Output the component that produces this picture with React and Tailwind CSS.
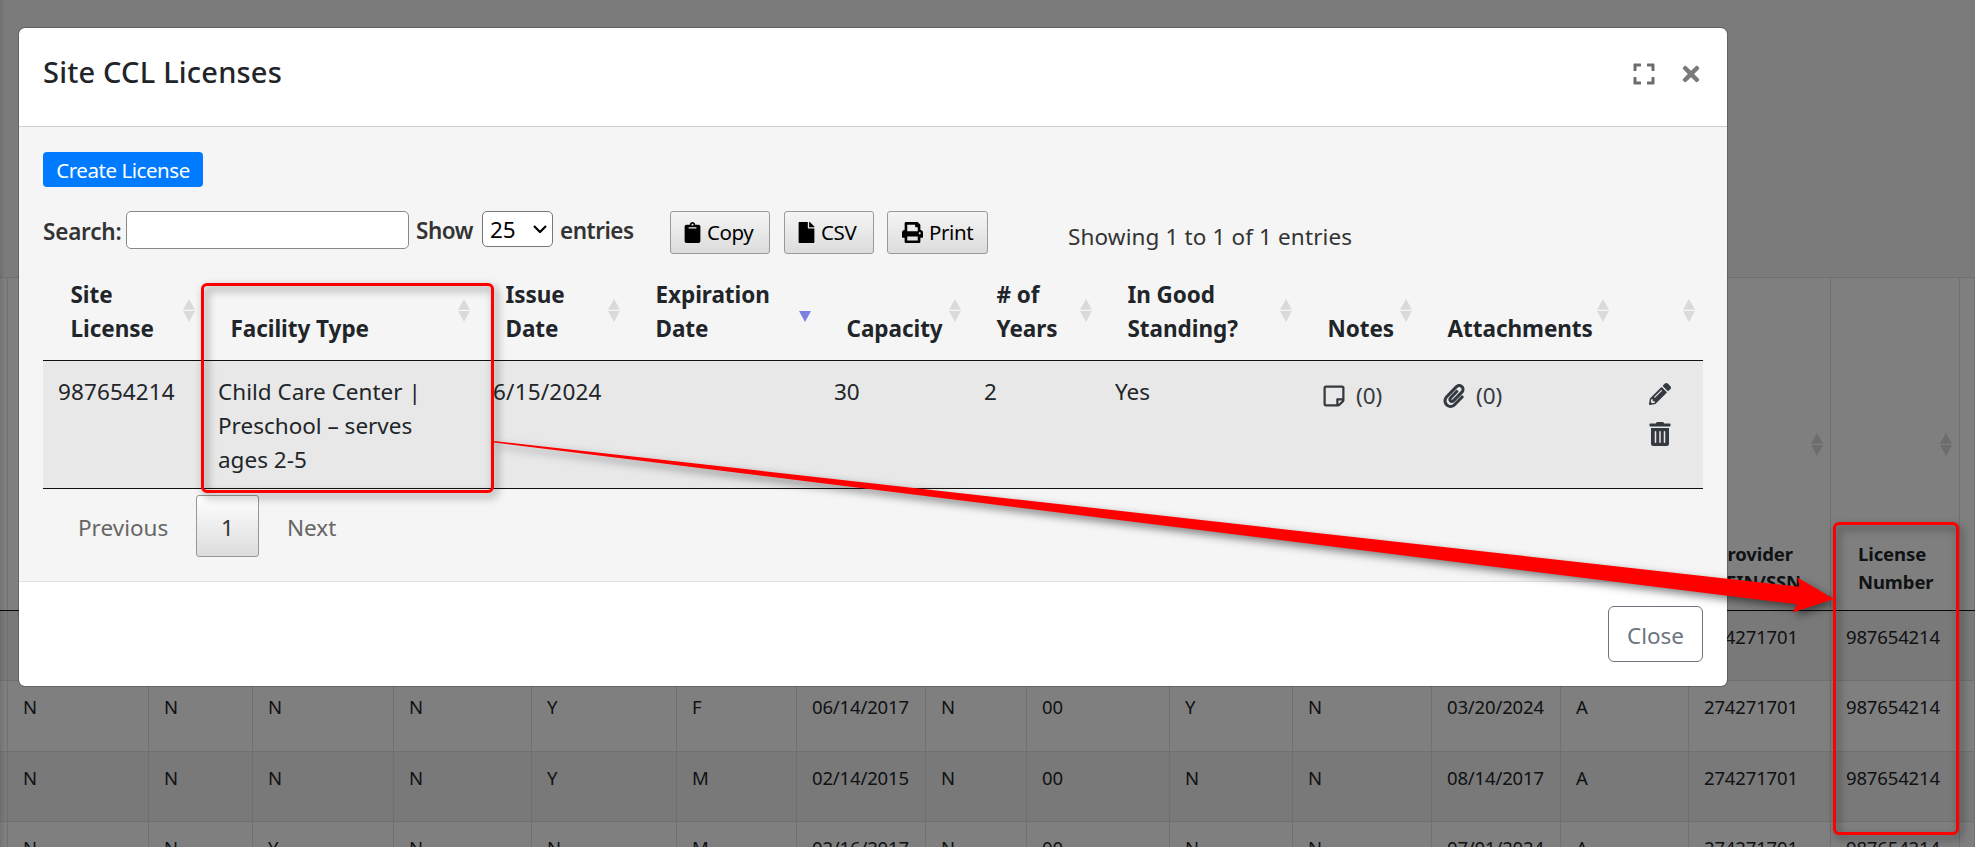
import React from "react";
import {
  FaClipboard,
  FaExpand,
  FaFile,
  FaPaperclip,
  FaPencilAlt,
  FaPrint,
  FaRegStickyNote,
  FaTimes,
  FaTrashAlt,
} from "react-icons/fa";

const BG_COLS =
  "grid grid-cols-[8px_141px_104px_141px_138px_145px_120px_129px_101px_143px_123px_139px_129px_128px_142px_129px_15px]";

const LICENSE_COLS =
  "grid grid-cols-[160px_275px_150px_191px_150px_131px_200px_120px_197px_86px]";

const bgRows = [
  ["", "N", "N", "N", "N", "Y", "F", "05/10/2016", "N", "00", "Y", "N", "03/20/2024", "A", "274271701", "987654214", ""],
  ["", "N", "N", "N", "N", "Y", "F", "06/14/2017", "N", "00", "Y", "N", "03/20/2024", "A", "274271701", "987654214", ""],
  ["", "N", "N", "N", "N", "Y", "M", "02/14/2015", "N", "00", "N", "N", "08/14/2017", "A", "274271701", "987654214", ""],
  ["", "N", "N", "Y", "N", "N", "M", "02/16/2017", "N", "00", "N", "N", "07/01/2024", "A", "274271701", "987654214", ""],
];

const bgHeaders = ["", "", "", "", "", "", "", "", "", "", "", "", "", "", "Provider FEIN/SSN", "License Number", ""];

const headers = [
  { lines: ["Site", "License"] },
  { lines: ["Facility Type"] },
  { lines: ["Issue", "Date"] },
  { lines: ["Expiration", "Date"], sorted: true },
  { lines: ["Capacity"] },
  { lines: ["# of", "Years"] },
  { lines: ["In Good", "Standing?"] },
  { lines: ["Notes"] },
  { lines: ["Attachments"] },
  { lines: [] },
];

function SortArrows({ sorted, className = "" }) {
  return (
    <svg viewBox="0 0 12 23" className={`h-[23px] w-3 ${className}`}>
      {!sorted && <path d="M6 0 12 10.7H0Z" fill="#dadada" />}
      <path d="M0 12H12L6 23Z" fill={sorted ? "#7c80e0" : "#dadada"} />
    </svg>
  );
}

function ToolButton({ icon, label, className = "" }) {
  return (
    <button
      className={`flex h-[43px] items-center rounded-[3px] border border-[#999] bg-linear-to-b from-[#f5f5f5] to-[#dcdcdc] text-[20.5px] tracking-[-0.4px] text-black ${className}`}
    >
      {icon}
      <span>{label}</span>
    </button>
  );
}

function BackgroundTable() {
  return (
    <div className="h-[847px] w-[1975px] overflow-hidden bg-[#f6f6f6] text-[18.5px] tracking-[-0.15px] text-[#212529]">
      <div className="h-[277px]" />
      <div className={`${BG_COLS} h-[334px] border-t border-b border-t-[#e0e0e0] border-b-[#111] bg-white`}>
        {bgHeaders.map((label, i) => (
          <div
            key={i}
            className="flex items-end border-r border-[#e0e0e0] pb-[14px] text-[18.5px] leading-[28px] font-bold tracking-[-0.1px]"
          >
            {label && (
              <div className="relative w-full pl-[27px]">
                {label.split(" ").map((word) => (
                  <div key={word}>{word}</div>
                ))}
                <SortArrows className="absolute right-[7px] -top-[107px]" />
              </div>
            )}
          </div>
        ))}
      </div>
      {bgRows.map((row, r) => (
        <div
          key={r}
          className={`${BG_COLS} border-b border-[#e0e0e0] ${r % 2 ? "h-[71px] bg-white" : "h-[70px] bg-[#f2f2f2]"}`}
        >
          {row.map((cell, c) => (
            <div key={c} className="border-r border-[#e0e0e0] pt-[12px] leading-[28px] whitespace-nowrap">
              {cell && <span className="ml-[15px]">{cell}</span>}
            </div>
          ))}
        </div>
      ))}
    </div>
  );
}

function Toolbar() {
  return (
    <div className="mt-6 flex h-[43px] items-start text-[22.5px] text-[#333]">
      <label className="w-[83px] pt-1 leading-[34px] font-semibold tracking-[-0.2px]">Search:</label>
      <input className="h-[38px] w-[283px] rounded-[5px] border border-[#888] bg-white" />
      <span className="ml-[7px] w-[66px] pt-[3px] leading-[34px] font-semibold tracking-[-0.5px]">Show</span>
      <div className="flex h-9 w-[71px] items-center justify-between rounded-[5px] border border-[#777] bg-white pr-[5px] pl-[7px] text-black">
        <span className="pt-0.5">25</span>
        <svg viewBox="0 0 14 8" className="h-2 w-[14px]" fill="none" stroke="black" strokeWidth="2.2">
          <path d="M1 1 7 7 13 1" />
        </svg>
      </div>
      <span className="ml-[7px] w-[110px] pt-[3px] leading-[34px] font-semibold tracking-[-0.5px]">entries</span>
      <ToolButton
        className="w-[100px] gap-[4px] pl-[11px]"
        label="Copy"
        icon={<FaClipboard className="size-[21px]" />}
      />
      <ToolButton
        className="ml-[14px] w-[90px] gap-[4px] pl-[11px]"
        label="CSV"
        icon={<FaFile className="size-[21px]" />}
      />
      <ToolButton
        className="ml-[13px] w-[101px] gap-[6px] pl-[14px]"
        label="Print"
        icon={<FaPrint className="size-[21px]" />}
      />
      <span className="ml-[80px] pt-[9px] leading-[34px] tracking-[0.13px]">Showing 1 to 1 of 1 entries</span>
    </div>
  );
}

function LicenseTable() {
  return (
    <div className="mt-6 text-[22.5px] leading-[34px] text-[#212529]">
      <div className={`${LICENSE_COLS} h-[83px] border-b border-[#111] pb-[14px]`}>
        {headers.map((h, i) => (
          <div key={i} className="relative flex flex-col justify-end pl-[27.5px] font-bold tracking-[-0.05px] whitespace-nowrap">
            {h.lines.map((line) => (
              <div key={line}>{line}</div>
            ))}
            <SortArrows sorted={h.sorted} className="absolute top-[21px] right-2" />
          </div>
        ))}
      </div>
      <div className={`${LICENSE_COLS} h-[128px] border-b border-[#111] bg-[#e8e8e8] pt-[14px]`}>
        <div className="pl-[15px] tracking-[0.1px]">987654214</div>
        <div className="pl-[15px]">
          Child Care Center |<br />
          Preschool – serves
          <br />
          ages 2-5
        </div>
        <div className="pl-[15px] tracking-[0.2px]">6/15/2024</div>
        <div />
        <div className="pl-[15px]">30</div>
        <div className="pl-[15px]">2</div>
        <div className="pl-[15px]">Yes</div>
        <div className="flex h-[42px] items-center gap-[10px] pl-[22px] text-[#343a40]">
          <FaRegStickyNote className="size-[24px]" />
          <span>(0)</span>
        </div>
        <div className="flex h-[42px] items-center gap-[10px] pl-[22px] text-[#343a40]">
          <FaPaperclip className="size-[24px]" />
          <span>(0)</span>
        </div>
        <div className="flex flex-col items-start gap-[17px] pt-[8px] pl-[32px] text-[#343a40]">
          <FaPencilAlt className="size-[22px]" />
          <FaTrashAlt className="-ml-px size-[24px]" />
        </div>
      </div>
    </div>
  );
}

function LicenseModal() {
  return (
    <div
      role="dialog"
      className="absolute top-[27px] left-[18px] flex h-[660px] w-[1710px] flex-col overflow-hidden rounded-[7px] border border-black/20 bg-white bg-clip-padding"
    >
      <div className="flex h-[99px] items-start border-b border-[#d0d0d0] pr-6 pl-6">
        <h5 className="grow pt-[22px] text-[29px] leading-[44px] font-medium tracking-[0.2px] text-[#212529]">
          Site CCL Licenses
        </h5>
        <FaExpand className="mt-[34px] size-6 text-[#6c6c6c]" />
        <FaTimes className="mt-[34px] ml-[23px] size-6 text-[#7a7a7a]" />
      </div>

      <div className="flex h-[455px] flex-col border-b border-[#dee2e6] bg-[#f5f5f5] px-6 pt-[25px]">
        <button className="h-[35px] w-[160px] rounded bg-[#007bff] text-[20.5px] leading-[37px] tracking-[-0.45px] text-white">
          Create License
        </button>
        <Toolbar />
        <LicenseTable />
        <div className="mt-[6px] flex h-[62px] items-center text-[22.5px] text-[#666]">
          <span className="w-[153px] pt-1 pl-[35px]">Previous</span>
          <span className="flex h-[62px] w-[63px] items-center justify-center rounded-[3px] border border-[#979797] bg-linear-to-b from-white to-[#dcdcdc] pt-1 text-[#333]">
            1
          </span>
          <span className="pt-1 pl-[28px]">Next</span>
        </div>
      </div>

      <div className="flex justify-end px-6 pt-6">
        <button className="h-14 w-[95px] rounded-md border border-[#6c757d] pt-1 text-[22.5px] text-[#6c757d]">
          Close
        </button>
      </div>
    </div>
  );
}

// Red highlight boxes and the arrow that joins them
function Callouts() {
  return (
    <svg
      viewBox="0 0 1975 847"
      className="pointer-events-none absolute inset-0 h-[847px] w-[1975px] drop-shadow-[3px_4px_4px_rgba(0,0,0,0.5)]"
    >
      <g fill="none" stroke="#f00" strokeWidth="3">
        <rect x="202.5" y="284.5" width="290" height="207" rx="4.5" />
        <rect x="1834.5" y="523.5" width="123" height="310" rx="4.5" />
      </g>
      <path
        d="M494 441 1799.5 586.8 1797.5 577.5 1834 599 1792.5 612.5 1797 604.3 494 442.5Z"
        fill="#f00"
      />
    </svg>
  );
}

export default function App() {
  return (
    <div className="relative h-[847px] w-[1975px] overflow-hidden font-['Noto_Sans',sans-serif] tracking-normal">
      <BackgroundTable />
      <div className="absolute inset-0 bg-black/50" />
      <div className="absolute inset-y-0 left-0 w-[5px] bg-linear-to-r from-black/10 to-transparent" />
      <LicenseModal />
      <Callouts />
    </div>
  );
}
